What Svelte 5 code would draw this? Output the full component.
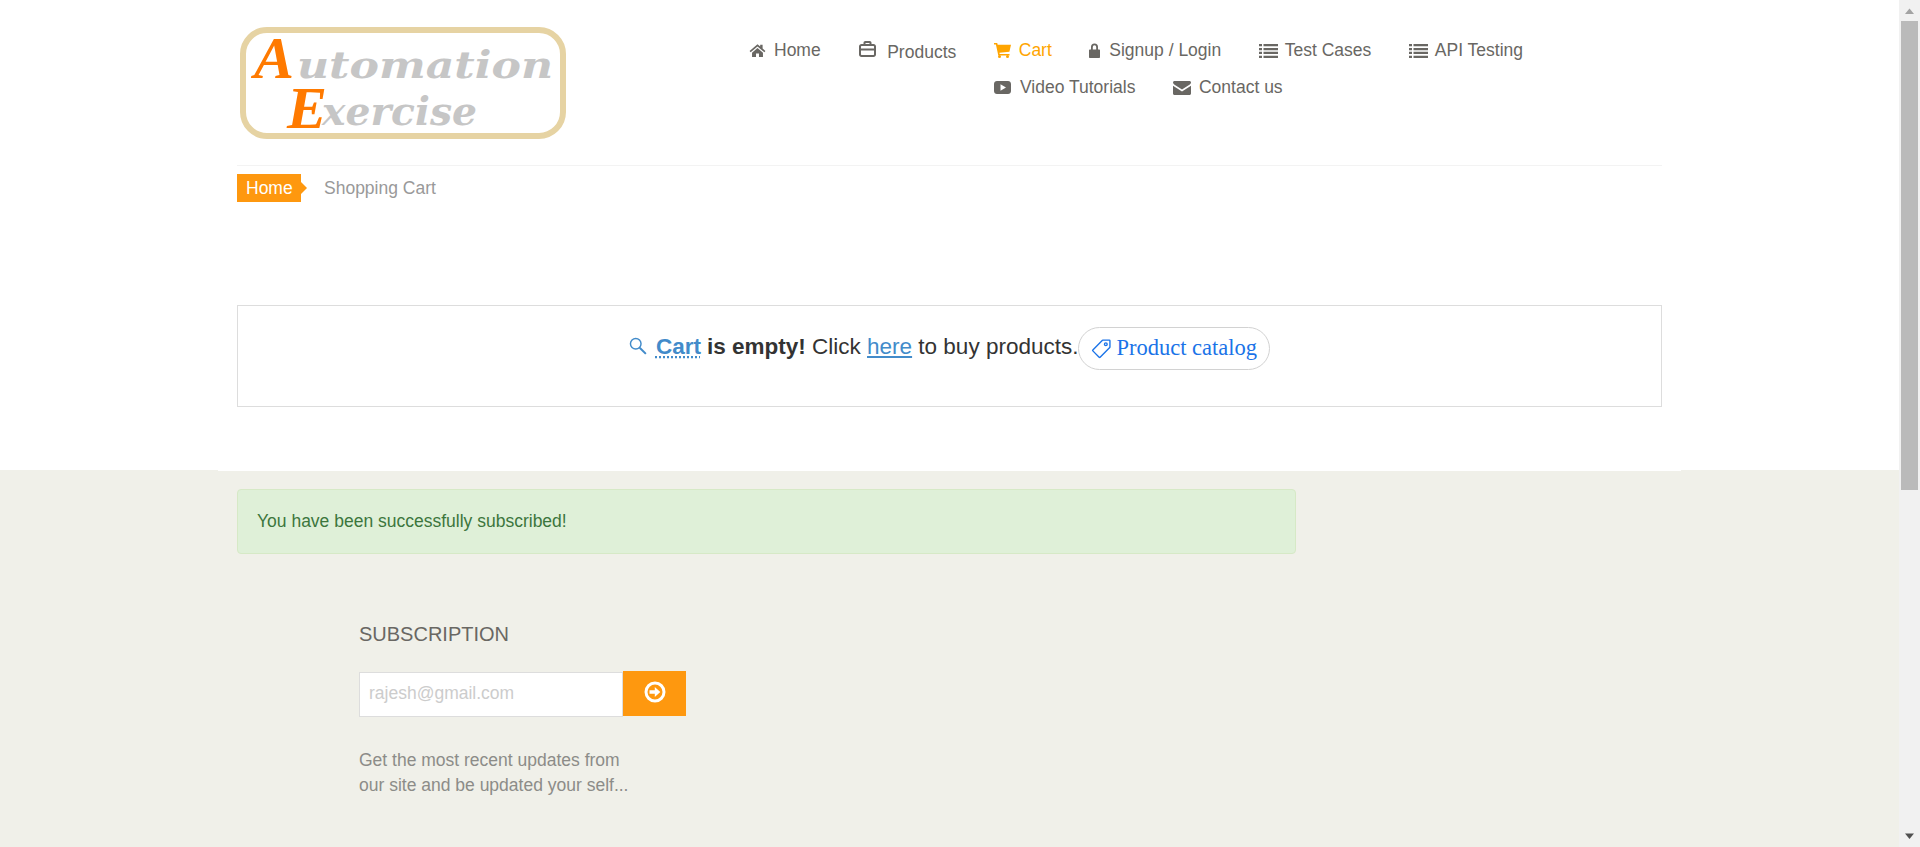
<script>
  const row1 = [
    { icon: 'home', label: 'Home' },
    { icon: 'brief', label: 'Products', low: true },
    { icon: 'cart', label: 'Cart', active: true },
    { icon: 'lock', label: 'Signup / Login' },
    { icon: 'list', label: 'Test Cases' },
    { icon: 'list', label: 'API Testing' }
  ];
  const row2 = [
    { icon: 'video', label: 'Video Tutorials' },
    { icon: 'mail', label: 'Contact us' }
  ];
</script>

{#snippet glyph(name)}
  {#if name === 'home'}
    <svg class="ic home" viewBox="0 0 24 24"><path d="M12 3 .8 12.6l1.5 1.9L12 6.2l9.7 8.3 1.5-1.9-4-3.4V4h-3.4v2.3zM12 8.4 4.3 15v6.2h5.6v-4.8h4.2v4.8h5.6V15z"/></svg>
  {:else if name === 'brief'}
    <svg class="ic brief" viewBox="0 0 17 16"><path fill-rule="evenodd" d="M4.500 3V1.800C4.500.8 5.300 0 6.300 0h4.400c1 0 1.800.8 1.800 1.800V3h2c1.400 0 2.500 1.100 2.500 2.500v8c0 1.400-1.100 2.500-2.500 2.500h-12C1.100 16 0 14.900 0 13.500v-8C0 4.100 1.100 3 2.500 3zm2 0h4V2h-4zm-4 2c-.3 0-.5.2-.5.500V7.500h13V5.500c0-.3-.2-.5-.5-.5zM2 9.500v4c0 .3.2.5.5.5h12c.3 0 .5-.2.5-.5v-4z"/></svg>
  {:else if name === 'cart'}
    <svg class="ic cart" viewBox="0 0 17 15"><path d="M0 0h3.200l.5 1.800H17l-1.600 6.900-10 1 .3 1.300h9.800v1.500H4.300L1.900 1.500H0z"/><circle cx="5.500" cy="13.500" r="1.500"/><circle cx="13.500" cy="13.500" r="1.500"/></svg>
  {:else if name === 'lock'}
    <svg class="ic lock" viewBox="0 0 11 15"><path fill-rule="evenodd" d="M2 6.500V4a3.500 3.500 0 0 1 7 0v2.500h1c.6 0 1 .4 1 1V14c0 .6-.4 1-1 1H1c-.6 0-1-.4-1-1V7.500c0-.6.4-1 1-1zm1.800 0h3.400V4a1.700 1.700 0 0 0-3.400 0z"/></svg>
  {:else if name === 'list'}
    <svg class="ic list" viewBox="0 0 19 14"><path d="M0 0h3v2.300H0zM4.500 0H19v2.300H4.500zM0 3.900h3v2.300H0zM4.500 3.900H19v2.300H4.500zM0 7.800h3v2.300H0zM4.500 7.800H19v2.300H4.500zM0 11.700h3V14H0zM4.500 11.700H19V14H4.500z"/></svg>
  {:else if name === 'video'}
    <svg class="ic video" viewBox="0 0 17 13"><path fill-rule="evenodd" d="M3 0h11c1.700 0 3 1.300 3 3v7c0 1.700-1.300 3-3 3H3c-1.700 0-3-1.300-3-3V3c0-1.700 1.300-3 3-3zm3.500 3.300v6.400l5.500-3.200z"/></svg>
  {:else if name === 'mail'}
    <svg class="ic mail" viewBox="0 0 18 14"><path d="M1.500 0h15C17.300 0 18 .7 18 1.500c0 .8-.5 1.500-1.200 2L9 8.500 1.200 3.500C.5 3 0 2.300 0 1.500 0 .7.700 0 1.500 0zM0 4.700l9 5.800 9-5.800v7.800c0 .8-.7 1.500-1.500 1.500h-15C.7 14 0 13.300 0 12.500z"/></svg>
  {/if}
{/snippet}

<div class="viewport">
  <div class="page">
    <header class="wrap">
      <div class="head">
        <svg class="logo" viewBox="0 0 330 116" role="img" aria-label="Automation Exercise">
          <rect x="5" y="5" width="320" height="106" rx="24" fill="#fff" stroke="#e6d3a3" stroke-width="6"/>
          <text class="lt" x="59" y="53" font-size="38" textLength="256" lengthAdjust="spacingAndGlyphs">utomation</text>
          <text class="lt" x="84" y="100" font-size="40" textLength="155" lengthAdjust="spacingAndGlyphs">xercise</text>
          <text class="la" x="16" y="53" font-size="60">A</text>
          <text class="la" x="49" y="103" font-size="60">E</text>
        </svg>
        <nav class="nav">
          <ul class="row">
            {#each row1 as item}
              <li class:active={item.active} class:low={item.low}>
                {@render glyph(item.icon)}<span>{item.label}</span>
              </li>
            {/each}
          </ul>
          <ul class="row second">
            {#each row2 as item}
              <li>
                {@render glyph(item.icon)}<span>{item.label}</span>
              </li>
            {/each}
          </ul>
        </nav>
      </div>
      <div class="crumbs">
        <span class="crumb-home">Home</span>
        <span class="crumb-cur">Shopping Cart</span>
      </div>
    </header>

    <section class="wrap">
      <div class="empty">
        <svg class="search" viewBox="0 0 16 16"><circle cx="6" cy="6" r="4.700" fill="none" stroke="currentColor" stroke-width="1.300"/><path d="m9.500 9.500 5.500 5.500" stroke="currentColor" stroke-width="1.800" fill="none"/></svg>
        <a class="cart-link" href="#top">Cart</a>
        <b>is empty!</b> Click <a class="here" href="#top">here</a> to buy products.<span class="pill">
          <svg class="tag" viewBox="0 0 16 16"><g transform="translate(16 0) scale(-1 1)"><path d="M6 4.500a1.500 1.500 0 1 1-3 0 1.500 1.500 0 0 1 3 0m-1 0a.5.5 0 1 0-1 0 .5.5 0 0 0 1 0"/><path d="M2 1h4.586a1 1 0 0 1 .707.293l7 7a1 1 0 0 1 0 1.414l-4.586 4.586a1 1 0 0 1-1.414 0l-7-7A1 1 0 0 1 1 6.586V2a1 1 0 0 1 1-1m0 5.586 7 7L13.586 9l-7-7H2z"/></g></svg>Product catalog</span>
      </div>
    </section>

    <footer class="foot">
      <div class="edge"></div>
      <div class="wrap">
        <div class="alert">You have been successfully subscribed!</div>
        <div class="sub">
          <h2>SUBSCRIPTION</h2>
          <form class="subform" onsubmit={(e) => e.preventDefault()}>
            <input type="email" placeholder="rajesh@gmail.com" />
            <button type="submit" aria-label="Subscribe">
              <svg viewBox="0 0 22 22" class="go"><circle cx="11" cy="11" r="9" fill="none" stroke="#fff" stroke-width="3"/><path d="M5.500 9.300h5.300V6l5.500 5-5.500 5v-3.300H5.500z" fill="#fff"/></svg>
            </button>
          </form>
          <p>Get the most recent updates from<br />our site and be updated your self...</p>
        </div>
      </div>
    </footer>
  </div>

  <div class="scrollbar" aria-hidden="true">
    <svg class="arrow" viewBox="0 0 21 21"><path d="M10.500 8.500 15 14H6z" fill="#a3a3a3"/></svg>
    <div class="thumb"></div>
    <div class="spacer"></div>
    <svg class="arrow" viewBox="0 0 21 21"><path d="M10.500 13 15 7.500H6z" fill="#505050"/></svg>
  </div>
</div>

<style>
  :global(body) {
    margin: 0;
    background: #fff;
    overflow: hidden;
    font-family: "Liberation Sans", Arial, sans-serif;
  }
  .viewport {
    display: flex;
    height: 847px;
    overflow: hidden;
  }
  .page {
    width: 1899px;
    flex: none;
    overflow: hidden;
  }
  .wrap {
    width: 1425px;
    margin-left: 237px;
  }
  .head {
    display: flex;
    height: 165px;
    border-bottom: 1px solid #f3f3f3;
    box-sizing: content-box;
  }
  .logo {
    width: 330px;
    height: 116px;
    margin: 25px 0 0 1px;
    flex: none;
  }
  .la {
    font-family: "Liberation Serif", serif;
    font-style: italic;
    font-weight: 700;
    fill: #ff7a00;
  }
  .lt {
    font-family: "DejaVu Serif", serif;
    font-style: italic;
    font-weight: 700;
    fill: #c6c6c6;
  }
  .nav {
    margin-left: 181px;
    padding-top: 32px;
  }
  .row {
    display: flex;
    gap: 37.500px;
    margin: 0;
    padding: 0;
    list-style: none;
    height: 37px;
    align-items: flex-start;
  }
  .second {
    padding-left: 245px;
  }
  .row li {
    display: flex;
    align-items: center;
    height: 37px;
    font-size: 17.500px;
    color: #696763;
    white-space: nowrap;
  }
  .row li.low span {
    position: relative;
    top: 2px;
  }
  .row li.active {
    color: #ffa500;
  }
  .ic {
    fill: currentColor;
    flex: none;
    margin-right: 8px;
  }
  .home { width: 17px; height: 17px; }
  .brief { width: 17px; height: 16px; margin-left: 1px; margin-right: 11px; position: relative; top: -2px; }
  .cart { width: 17px; height: 15px; }
  .lock { width: 11px; height: 15px; margin-right: 9px; }
  .list { width: 19px; height: 14px; margin-right: 7px; }
  .video { width: 17px; height: 13px; margin-right: 9px; }
  .mail { width: 18px; height: 14px; }

  .crumbs {
    display: flex;
    align-items: center;
    height: 28px;
    margin-top: 8px;
    font-size: 17.500px;
  }
  .crumb-home {
    position: relative;
    display: flex;
    align-items: center;
    height: 28px;
    padding: 0 9px;
    width: 46px;
    background: #fe980f;
    color: #fff;
  }
  .crumb-home::after {
    content: "";
    position: absolute;
    left: 100%;
    top: 8px;
    border-left: 6px solid #fe980f;
    border-top: 6px solid transparent;
    border-bottom: 6px solid transparent;
  }
  .crumb-cur {
    margin-left: 23px;
    color: #999;
  }

  .empty {
    height: 102px;
    margin-top: 103px;
    box-sizing: border-box;
    border: 1px solid #ddd;
    padding-top: 14px;
    display: flex;
    justify-content: center;
    align-items: flex-start;
    white-space: pre-wrap;
    font-size: 22.500px;
    line-height: 54px;
    color: #333;
    margin-bottom: 63px;
  }
  .empty .search {
    width: 18px;
    height: 18px;
    color: #428bca;
    margin: 17px 9px 0 0;
    flex: none;
  }
  .empty a { color: #428bca; }
  .cart-link {
    font-weight: 700;
    text-decoration: underline dotted;
    margin-right: 6px;
  }
  .pill {
    display: inline-flex;
    align-items: center;
    box-sizing: border-box;
    height: 43px;
    margin-top: 7px;
    padding: 0 12px;
    border: 1px solid #d2d2d2;
    border-radius: 22px;
    color: #1a73e8;
    font-family: "Liberation Serif", serif;
    font-size: 22.500px;
    line-height: 1;
  }
  .tag {
    width: 22px;
    height: 22px;
    fill: currentColor;
    margin: 0 4px 0 -1px;
  }

  .foot {
    background: #f0f0e9;
    height: 377px;
  }
  .edge {
    height: 1px;
    margin: 0 218px;
    background: #fff;
  }
  .alert {
    box-sizing: border-box;
    width: 1059px;
    height: 65px;
    margin-top: 18px;
    padding: 20px 19px;
    background: #dff0d8;
    border: 1px solid #d6e9c6;
    border-radius: 4px;
    color: #3c763d;
    font-size: 17.500px;
    line-height: 23px;
  }
  .sub {
    margin-left: 122px;
    padding-top: 68px;
  }
  h2 {
    margin: 0;
    font-size: 20px;
    font-weight: 400;
    line-height: 24px;
    color: #696763;
  }
  .subform {
    display: flex;
    margin-top: 25px;
    align-items: flex-start;
  }
  input {
    box-sizing: border-box;
    width: 264px;
    height: 45px;
    margin-top: 1px;
    padding: 0 9px 2px;
    border: 1px solid #ddd;
    background: #fff;
    font: 17.500px "Liberation Sans", Arial, sans-serif;
    outline: none;
    border-radius: 0;
  }
  input::placeholder { color: #ccc; opacity: 1; }
  button {
    width: 63px;
    height: 45px;
    padding: 0;
    border: 0;
    background: #fe980f;
    display: flex;
    align-items: center;
    justify-content: center;
  }
  .go {
    width: 22px;
    height: 22px;
    position: relative;
    top: -2px;
  }
  p {
    margin: 31px 0 0;
    font-size: 17.500px;
    line-height: 25px;
    color: #8c8c88;
  }

  .scrollbar {
    width: 21px;
    flex: none;
    background: #f1f1f1;
    display: flex;
    flex-direction: column;
    align-items: center;
  }
  .arrow { width: 21px; height: 21px; flex: none; }
  .thumb {
    width: 17px;
    height: 469px;
    background: #bababa;
    flex: none;
  }
  .spacer { flex: 1; }
</style>
